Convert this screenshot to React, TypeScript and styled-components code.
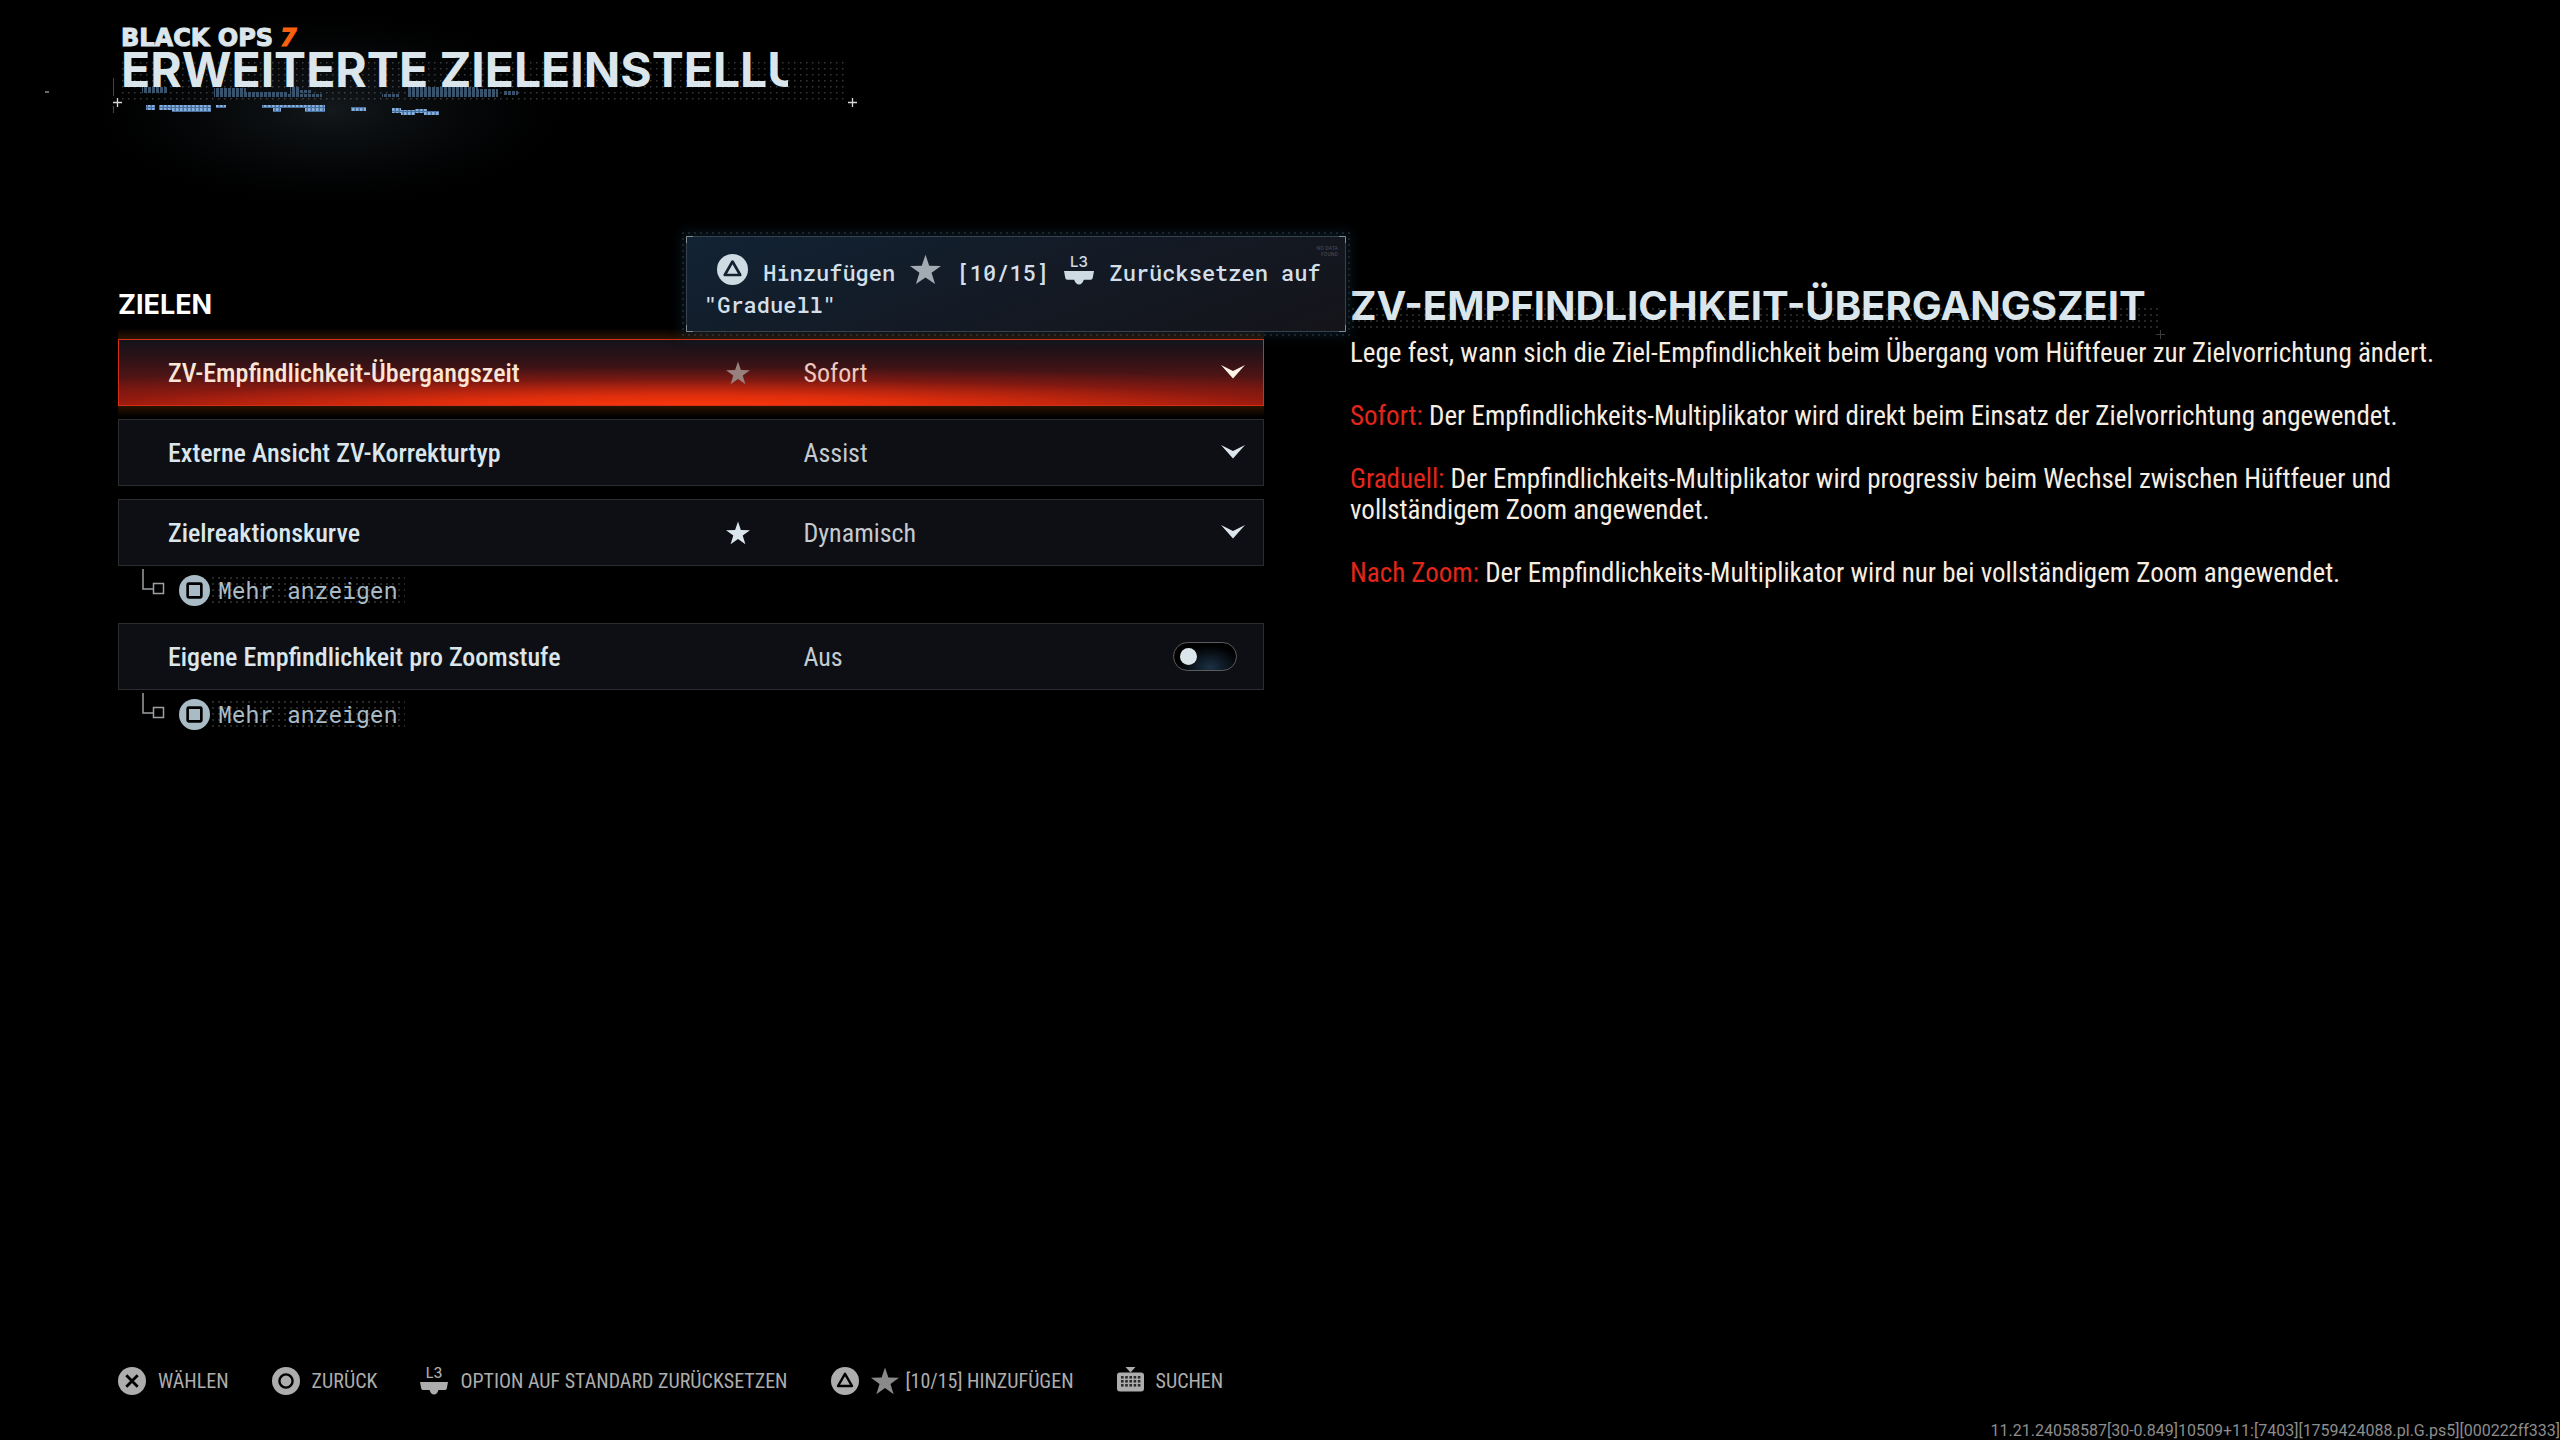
import React, { useState } from "react";
import styled, { createGlobalStyle, css } from "styled-components";

const condensed = '"Roboto Condensed", Roboto, "Liberation Sans", sans-serif';
const display = 'Inter, "Liberation Sans", sans-serif';
const mono = '"Roboto Mono", "Liberation Mono", monospace';

const color = {
  ice: "#dbe6ec",
  steel: "#a9bcc6",
  value: "#c3cad0",
  cream: "#f6eee3",
  red: "#e3261a",
  hint: "#adadad",
  line: "#2b2c30",
  panel: "#0e0f14",
};

const GlobalStyle = createGlobalStyle`
  *, *::before, *::after { box-sizing: border-box; }
  body { margin: 0; background: #000; color: ${color.ice}; font-family: ${condensed}; }
  h1, h2, p { margin: 0; }
  button, select, input { margin: 0; font: inherit; color: inherit; }
`;

const dots = (tint: string, step = 6) => css`
  background-image: radial-gradient(circle, ${tint} 0 1px, transparent 1px);
  background-size: ${step}px ${step}px;
`;

const Screen = styled.div`
  display: flex;
  flex-direction: column;
  min-height: 100vh;
  background: #000;
  overflow: hidden;
`;

/* ---------- header ---------- */

const Header = styled.header`
  position: relative;
  padding: 29px 118px 0 121px;
`;

const HeaderArt = styled.svg`
  position: absolute;
  top: 0;
  left: 0;
  width: 900px;
  height: 260px;
  pointer-events: none;
`;

const Brand = styled.div`
  position: relative;
  font: 700 24px/18px "DejaVu Sans", "Liberation Sans", sans-serif;
  color: ${color.ice};
  -webkit-text-stroke: 1px ${color.ice};
`;

const BrandNumber = styled.span`
  margin-left: 7px;
  color: #f9600f;
  font-style: italic;
  -webkit-text-stroke: 1px #f9600f;
`;

const Title = styled.h1`
  position: relative;
  width: 667px;
  overflow: hidden;
  white-space: nowrap;
  font: 700 48px/46px ${display};
  color: ${color.ice};
`;

/* ---------- body ---------- */

const Main = styled.main`
  display: grid;
  grid-template-columns: minmax(0, 1146fr) minmax(0, 1092fr);
  gap: 86px;
  padding: 193px 118px 40px;
`;

const SectionTitle = styled.h2`
  margin-bottom: 15px;
  font: 700 27px/38px ${display};
  color: #fff;
`;

const Options = styled.div`
  display: flex;
  flex-direction: column;
`;

const OptionBlock = styled.div`
  position: relative;
  & + & { margin-top: 13px; }
  &[data-expandable="true"] + & { margin-top: 0; }
`;

const Row = styled.div<{ $active?: boolean }>`
  position: relative;
  display: grid;
  grid-template-columns: minmax(0, 559fr) 77px minmax(0, 460fr);
  align-items: stretch;
  height: 67px;
  padding-left: 49px;
  border: 1px solid ${color.line};
  background: ${color.panel};
  font-size: 26px;
  font-weight: 500;
  color: ${color.ice};
  ${(p) =>
    p.$active &&
    css`
      border-color: #d42f16;
      color: #fbe5d6;
      background:
        radial-gradient(ellipse 75% 62% at 50% 104%, #ff390b 0%, rgba(240, 50, 12, 0.85) 30%, rgba(190, 32, 14, 0.35) 70%, transparent 100%) padding-box,
        linear-gradient(#131319 0%, #2a1217 25%, #4d1415 55%, #85170f 100%) padding-box;
      &::before, &::after {
        content: "";
        position: absolute;
        left: -1px;
        right: -1px;
        height: 11px;
      }
      &::before { bottom: calc(100% + 1px); background: linear-gradient(transparent, #2b1300); }
      &::after { top: calc(100% + 1px); background: linear-gradient(#2b1300, transparent); }
    `}
`;

const RowLabel = styled.label`
  display: flex;
  align-items: center;
  white-space: nowrap;
`;

const StarSlot = styled.span`
  display: flex;
  align-items: center;
`;

const Control = styled.div<{ $active?: boolean }>`
  position: relative;
  display: flex;
  align-items: center;
  color: ${(p) => (p.$active ? "#efc9bf" : color.value)};
  font-weight: 400;
`;

const Select = styled.select`
  width: 100%;
  height: 100%;
  padding: 0 60px 0 0;
  border: 0;
  outline: 0;
  appearance: none;
  background: transparent;
  cursor: pointer;
  option { background: ${color.panel}; }
`;

const ChevronMark = styled.svg<{ $active?: boolean }>`
  position: absolute;
  right: 18px;
  top: 50%;
  width: 24px;
  height: 14px;
  margin-top: -8px;
  fill: ${(p) => (p.$active ? "#fdf3e6" : color.ice)};
  pointer-events: none;
`;

const SwitchState = styled.span`
  flex: 1;
`;

const Switch = styled.input`
  appearance: none;
  display: flex;
  align-items: center;
  width: 64px;
  height: 29px;
  margin-right: 26px;
  padding: 0 6px;
  border: 1px solid #5a5c60;
  border-radius: 15px;
  background: radial-gradient(ellipse 50% 80% at 58% 90%, #1b3145, #000 100%);
  cursor: pointer;
  &::before {
    content: "";
    width: 17px;
    height: 17px;
    border-radius: 50%;
    background: ${color.ice};
  }
  &:checked { justify-content: flex-end; }
`;

const MoreLine = styled.div`
  display: flex;
  align-items: flex-start;
  height: 57px;
  padding-left: 24px;
`;

const MoreButton = styled.button`
  display: flex;
  align-items: center;
  margin: 9px 0 0 14px;
  padding: 0;
  border: 0;
  background: none;
  cursor: pointer;
`;

const MoreText = styled.span`
  padding: 0 8px;
  font: 400 23px/31px ${mono};
  color: ${color.steel};
  ${dots("rgba(120,130,120,0.32)")}
`;

/* ---------- tooltip ---------- */

const Tooltip = styled.div`
  position: absolute;
  z-index: 2;
  right: -82px;
  bottom: calc(100% + 7px);
  width: 660px;
  height: 96px;
  padding: 17px 10px 12px 17px;
  border: 1px solid #36424d;
  box-shadow: 0 0 12px 4px rgba(28, 62, 88, 0.35);
  font: 500 22px/32px ${mono};
  color: #d3dfe8;
  text-indent: 11px;
  &::before, &::after {
    content: "";
    position: absolute;
    z-index: -1;
  }
  &::before {
    inset: -7px;
    ${dots("rgba(110,140,160,0.2)")}
  }
  &::after {
    inset: 0;
    background: linear-gradient(160deg, #122334 0%, #131a25 50%, #15141a 100%);
  }
`;

const TooltipCorners = styled.svg`
  position: absolute;
  inset: -1px;
  width: 660px;
  height: 96px;
  pointer-events: none;
`;

const NoData = styled.span`
  position: absolute;
  top: 8px;
  right: 7px;
  font: 400 6px/6px ${condensed};
  text-align: right;
  text-indent: 0;
  color: #454b54;
`;

/* ---------- description ---------- */

const Detail = styled.section`
  position: relative;
  z-index: 0;
  min-width: 0;
`;

const DetailTitle = styled.h2`
  position: relative;
  display: inline-block;
  margin-bottom: 12px;
  font: 700 40px/40px ${display};
  color: ${color.ice};
  white-space: nowrap;
  &::before {
    content: "";
    position: absolute;
    z-index: -1;
    left: 0;
    right: -16px;
    top: 20px;
    height: 24px;
    ${dots("rgba(150,150,150,0.25)")}
  }
`;

const DetailPlus = styled.svg`
  position: absolute;
  right: -19px;
  top: 44px;
  width: 9px;
  height: 9px;
  stroke: #3a3a3a;
`;

const Paragraph = styled.p`
  font-size: 27px;
  line-height: 31px;
  color: ${color.cream};
  & + & { margin-top: 32px; }
`;

const Term = styled.span`
  color: ${color.red};
`;

/* ---------- footer ---------- */

const Footer = styled.footer`
  margin-top: auto;
`;

const Hints = styled.nav`
  display: flex;
  align-items: center;
  gap: 43px;
  padding: 0 118px;
  margin-bottom: 26px;
`;

const Hint = styled.button`
  display: flex;
  align-items: center;
  gap: 12px;
  height: 30px;
  padding: 0;
  border: 0;
  background: none;
  font: 400 20px/30px ${condensed};
  color: ${color.hint};
  white-space: nowrap;
  cursor: pointer;
`;

const HintStarText = styled.span`
  display: flex;
  align-items: center;
  gap: 7px;
`;

const Build = styled.div`
  font: 400 16px/18px Roboto, "Liberation Sans", sans-serif;
  color: #8d8d8d;
  text-align: right;
`;

/* ---------- icons ---------- */

const Glyph = styled.svg<{ $inline?: boolean }>`
  flex: none;
  display: block;
  overflow: visible;
  ${(p) =>
    p.$inline &&
    css`
      display: inline-block;
      margin: 0 2px;
      vertical-align: -4px;
    `}
`;

type IconProps = { size?: number; tint?: string; ink?: string; inline?: boolean };

function PadButton({ kind, size = 28, tint = color.hint, ink = "#000", inline }: IconProps & { kind: "x" | "o" | "tri" | "sq" }) {
  return (
    <Glyph $inline={inline} width={size} height={size} viewBox="0 0 28 28" aria-hidden="true">
      <circle cx="14" cy="14" r="14" fill={tint} />
      <g fill="none" stroke={ink} strokeWidth="2.4" strokeLinejoin="round">
        {kind === "x" && <path d="M8.3 8.3 19.7 19.7M19.7 8.3 8.3 19.7" strokeWidth="2.8" />}
        {kind === "o" && <circle cx="14" cy="14" r="6.6" />}
        {kind === "tri" && <path d="M14 6.8 21 19H7Z" />}
        {kind === "sq" && <rect x="7.8" y="7.8" width="12.4" height="12.4" rx="1" />}
      </g>
    </Glyph>
  );
}

function Star({ size = 24, tint = color.ice, inline }: IconProps) {
  return (
    <Glyph $inline={inline} width={size} height={size} viewBox="0 0 24 24" fill={tint} aria-hidden="true">
      <path d="M12 .5 14.9 9.1 24 9.2 16.7 14.6 19.4 23.3 12 18.1 4.6 23.3 7.3 14.6 0 9.2 9.1 9.1Z" />
    </Glyph>
  );
}

function StickL3({ size = 28, tint = color.hint, inline }: IconProps) {
  return (
    <Glyph $inline={inline} width={size} height={size} viewBox="0 0 28 28" fill={tint} aria-hidden="true">
      <text x="14" y="11" textAnchor="middle" fontFamily={display} fontSize="14" fontWeight="500">L3</text>
      <path d="M0 15H28L26.8 21.5Q26.5 23 25 23H18.5Q17 27.500 14 27.500T9.500 23H3Q1.500 23 1.200 21.500Z" />
    </Glyph>
  );
}

function Keyboard() {
  const cells = [0, 1, 2, 3, 4].flatMap((c) => [0, 1, 2].map((r) => [4 + c * 4.2, 10 + r * 4]));
  return (
    <Glyph width="27" height="28" viewBox="0 0 27 28" fill={color.hint} aria-hidden="true">
      <path d="M8.500 0H18.500L13.500 5.500Z" />
      <rect x="0" y="5.500" width="27" height="19" rx="3" />
      {cells.map(([x, y]) => (
        <rect key={`${x}-${y}`} x={x} y={y - 1} width="2.600" height="2.600" fill="#000" opacity="0.75" />
      ))}
    </Glyph>
  );
}

function Chevron({ active }: { active?: boolean }) {
  return (
    <ChevronMark $active={active} viewBox="0 0 24 14" aria-hidden="true">
      <path d="M0 0 12 6 24 0 12 13.500Z" />
    </ChevronMark>
  );
}

function Branch() {
  return (
    <Glyph width="23" height="32" viewBox="0 0 23 32" fill="none" stroke="#9aa0a3" strokeWidth="1.500" aria-hidden="true">
      <path d="M1 3V23H11" />
      <rect x="11.500" y="17.500" width="10" height="10" />
    </Glyph>
  );
}

/* Scan-line fragments under the title: x, y, width, height. */
const faintScans = [
  [142, 87, 26, 6], [214, 88, 32, 9], [246, 92, 42, 5], [290, 87, 10, 8], [300, 90, 12, 3],
  [284, 94, 38, 3], [382, 94, 18, 3], [408, 87, 70, 10], [478, 89, 20, 8], [504, 91, 14, 4],
];
const brightScans = [
  [146, 105, 9, 5], [159, 105, 14, 5], [172, 105, 39, 7], [216, 105, 10, 3], [262, 105, 12, 3],
  [273, 105, 8, 7], [281, 105, 24, 3], [305, 105, 20, 7], [351, 107, 15, 4], [392, 108, 9, 5],
  [401, 110, 14, 5], [415, 109, 12, 4], [424, 111, 15, 4],
];

function HeaderDrawing() {
  return (
    <HeaderArt viewBox="0 0 900 260" aria-hidden="true">
      <defs>
        <radialGradient id="haze" cx="0.5" cy="0.45" r="0.5">
          <stop offset="0" stopColor="#5b7080" stopOpacity="0.22" />
          <stop offset="0.45" stopColor="#33424f" stopOpacity="0.13" />
          <stop offset="1" stopColor="#000" stopOpacity="0" />
        </radialGradient>
        <pattern id="grid" width="6" height="6" patternUnits="userSpaceOnUse">
          <rect x="2" y="2" width="1.500" height="1.500" fill="#8a8a8a" opacity="0.4" />
        </pattern>
        <pattern id="scanFaint" width="4" height="4" patternUnits="userSpaceOnUse">
          <rect width="3" height="4" fill="#38526b" />
        </pattern>
        <pattern id="scanBright" width="4" height="4" patternUnits="userSpaceOnUse">
          <rect width="4" height="4" fill="#4670a0" />
          <rect width="2.500" height="3" fill="#86aedb" />
        </pattern>
      </defs>
      <ellipse cx="330" cy="120" rx="270" ry="110" fill="url(#haze)" />
      <rect x="120" y="62" width="728" height="41" fill="url(#grid)" />
      {faintScans.map(([x, y, w, h]) => (
        <rect key={`${x}-${y}`} x={x} y={y} width={w} height={h} fill="url(#scanFaint)" />
      ))}
      {brightScans.map(([x, y, w, h]) => (
        <rect key={`${x}-${y}`} x={x} y={y} width={w} height={h} fill="url(#scanBright)" />
      ))}
      <path d="M113.500 78V96M113.500 106V113" stroke="#2e4a60" />
      <path d="M113 102.500H122M117.500 98V107M848 102.500H857M852.500 98V107" stroke="#d8d8d8" strokeWidth="1.300" />
      <rect x="45" y="91" width="4" height="2" fill="#6a6a6a" />
    </HeaderArt>
  );
}

/* ---------- composed parts ---------- */

type Option = {
  id: string;
  label: string;
  values: string[];
  star?: string;
  active?: boolean;
  more?: boolean;
};

const options: Option[] = [
  { id: "transition", label: "ZV-Empfindlichkeit-Übergangszeit", values: ["Sofort", "Graduell", "Nach Zoom"], star: "#98807f", active: true },
  { id: "correction", label: "Externe Ansicht ZV-Korrekturtyp", values: ["Assist"] },
  { id: "curve", label: "Zielreaktionskurve", values: ["Dynamisch"], star: color.ice, more: true },
];

function More() {
  return (
    <MoreLine>
      <Branch />
      <MoreButton type="button">
        <PadButton kind="sq" size={31} tint={color.steel} />
        <MoreText>Mehr anzeigen</MoreText>
      </MoreButton>
    </MoreLine>
  );
}

function ActionTooltip() {
  return (
    <Tooltip role="tooltip">
      <PadButton inline kind="tri" size={31} tint="#cfdbe2" ink="#142130" /> Hinzufügen{" "}
      <Star inline size={31} tint="#a3abb2" /> [10/15]{" "}
      <StickL3 inline size={30} tint="#cfdbe2" /> Zurücksetzen auf "Graduell"
      <NoData>NO DATA<br />FOUND</NoData>
      <TooltipCorners viewBox="0 0 660 96" fill="none" stroke="#7f8a92" aria-hidden="true">
        <path d="M.5 7V.5H7M653 .5H659.500V7M.5 89V95.500H7M653 95.500H659.500V89" />
      </TooltipCorners>
    </Tooltip>
  );
}

export default function App() {
  const [perZoom, setPerZoom] = useState(false);
  return (
    <Screen>
      <GlobalStyle />
      <Header>
        <HeaderDrawing />
        <Brand>BLACK OPS<BrandNumber>7</BrandNumber></Brand>
        <Title>ERWEITERTE ZIELEINSTELLU</Title>
      </Header>

      <Main>
        <section>
          <SectionTitle>ZIELEN</SectionTitle>
          <Options>
            {options.map((o) => (
              <OptionBlock key={o.id} data-expandable={!!o.more}>
                <Row $active={o.active}>
                  <RowLabel htmlFor={o.id}>{o.label}</RowLabel>
                  <StarSlot>{o.star && <Star tint={o.star} />}</StarSlot>
                  <Control $active={o.active}>
                    <Select id={o.id}>
                      {o.values.map((v) => <option key={v}>{v}</option>)}
                    </Select>
                    <Chevron active={o.active} />
                  </Control>
                </Row>
                {o.active && <ActionTooltip />}
                {o.more && <More />}
              </OptionBlock>
            ))}
            <OptionBlock>
              <Row>
                <RowLabel htmlFor="perzoom">Eigene Empfindlichkeit pro Zoomstufe</RowLabel>
                <StarSlot />
                <Control>
                  <SwitchState>{perZoom ? "An" : "Aus"}</SwitchState>
                  <Switch id="perzoom" type="checkbox" role="switch" checked={perZoom} onChange={(e) => setPerZoom(e.target.checked)} />
                </Control>
              </Row>
              <More />
            </OptionBlock>
          </Options>
        </section>

        <Detail>
          <DetailTitle>
            ZV-EMPFINDLICHKEIT-ÜBERGANGSZEIT
            <DetailPlus viewBox="0 0 9 9" aria-hidden="true"><path d="M0 4.500H9M4.500 0V9" /></DetailPlus>
          </DetailTitle>
          <Paragraph>
            Lege fest, wann sich die Ziel-Empfindlichkeit beim Übergang vom Hüftfeuer zur Zielvorrichtung ändert.
          </Paragraph>
          <Paragraph>
            <Term>Sofort:</Term> Der Empfindlichkeits-Multiplikator wird direkt beim Einsatz der Zielvorrichtung angewendet.
          </Paragraph>
          <Paragraph>
            <Term>Graduell:</Term> Der Empfindlichkeits-Multiplikator wird progressiv beim Wechsel zwischen Hüftfeuer und vollständigem Zoom angewendet.
          </Paragraph>
          <Paragraph>
            <Term>Nach Zoom:</Term> Der Empfindlichkeits-Multiplikator wird nur bei vollständigem Zoom angewendet.
          </Paragraph>
        </Detail>
      </Main>

      <Footer>
        <Hints aria-label="Steuerung">
          <Hint type="button"><PadButton kind="x" />WÄHLEN</Hint>
          <Hint type="button"><PadButton kind="o" />ZURÜCK</Hint>
          <Hint type="button"><StickL3 />OPTION AUF STANDARD ZURÜCKSETZEN</Hint>
          <Hint type="button">
            <PadButton kind="tri" />
            <HintStarText><Star size={28} tint="#8a8a8a" />[10/15] HINZUFÜGEN</HintStarText>
          </Hint>
          <Hint type="button"><Keyboard />SUCHEN</Hint>
        </Hints>
        <Build>11.21.24058587[30-0.849]10509+11:[7403][1759424088.pl.G.ps5][000222ff333]</Build>
      </Footer>
    </Screen>
  );
}
